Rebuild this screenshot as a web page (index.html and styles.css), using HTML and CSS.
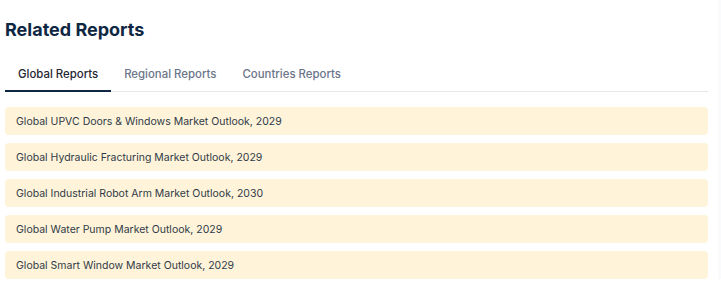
FILE: index.html
```html
<!DOCTYPE html>
<html lang="en">
<head>
    <meta charset="UTF-8">
    <meta name="viewport" content="width=device-width, initial-scale=1.0">
    <title>Related Reports</title>
    <link rel="stylesheet" href="styles.css">
</head>
<body>

<section class="related">
    <h2 class="related-title">Related Reports</h2>

    <div class="tabs">
        <button class="tab active">Global Reports</button>
        <button class="tab">Regional Reports</button>
        <button class="tab">Countries Reports</button>
    </div>

    <ul class="report-list">
        <li class="report-item">Global UPVC Doors &amp; Windows Market Outlook, 2029</li>
        <li class="report-item">Global Hydraulic Fracturing Market Outlook, 2029</li>
        <li class="report-item">Global Industrial Robot Arm Market Outlook, 2030</li>
        <li class="report-item">Global Water Pump Market Outlook, 2029</li>
        <li class="report-item">Global Smart Window Market Outlook, 2029</li>
    </ul>
</section>

</body>
</html>
```

FILE: styles.css
```css
body {
    margin: 0;
    padding: 0;
    background-color: #ffffff;
    font-family: 'Inter', 'Roboto', sans-serif;
    border-right: 3px solid #fafbfc;
}

.related {
    padding: 18px 10px 0 5px;
}

.related-title {
    margin: 0;
    font-size: 18px;
    line-height: 24px;
    font-weight: 700;
    color: #0f2742;
}

.tabs {
    display: flex;
    margin-top: 16px;
    border-bottom: 1px solid #e5e7eb;
}

.tab {
    background: none;
    border: none;
    border-bottom: 2px solid transparent;
    margin-bottom: -1px;
    padding: 8px 13px;
    font-family: inherit;
    font-size: 11.4px;
    line-height: 16px;
    font-weight: 500;
    color: #6b7589;
    cursor: pointer;
}

.tab.active {
    color: #1f2733;
    border-bottom-color: #0f2742;
}

.report-list {
    list-style: none;
    margin: 15px 0 0;
    padding: 0;
    display: flex;
    flex-direction: column;
    gap: 8px;
}

.report-item {
    background-color: #fff4d9;
    border-radius: 4px;
    padding: 7px 11px 5px;
    font-size: 10.5px;
    line-height: 16px;
    color: #2f3a48;
}
```
